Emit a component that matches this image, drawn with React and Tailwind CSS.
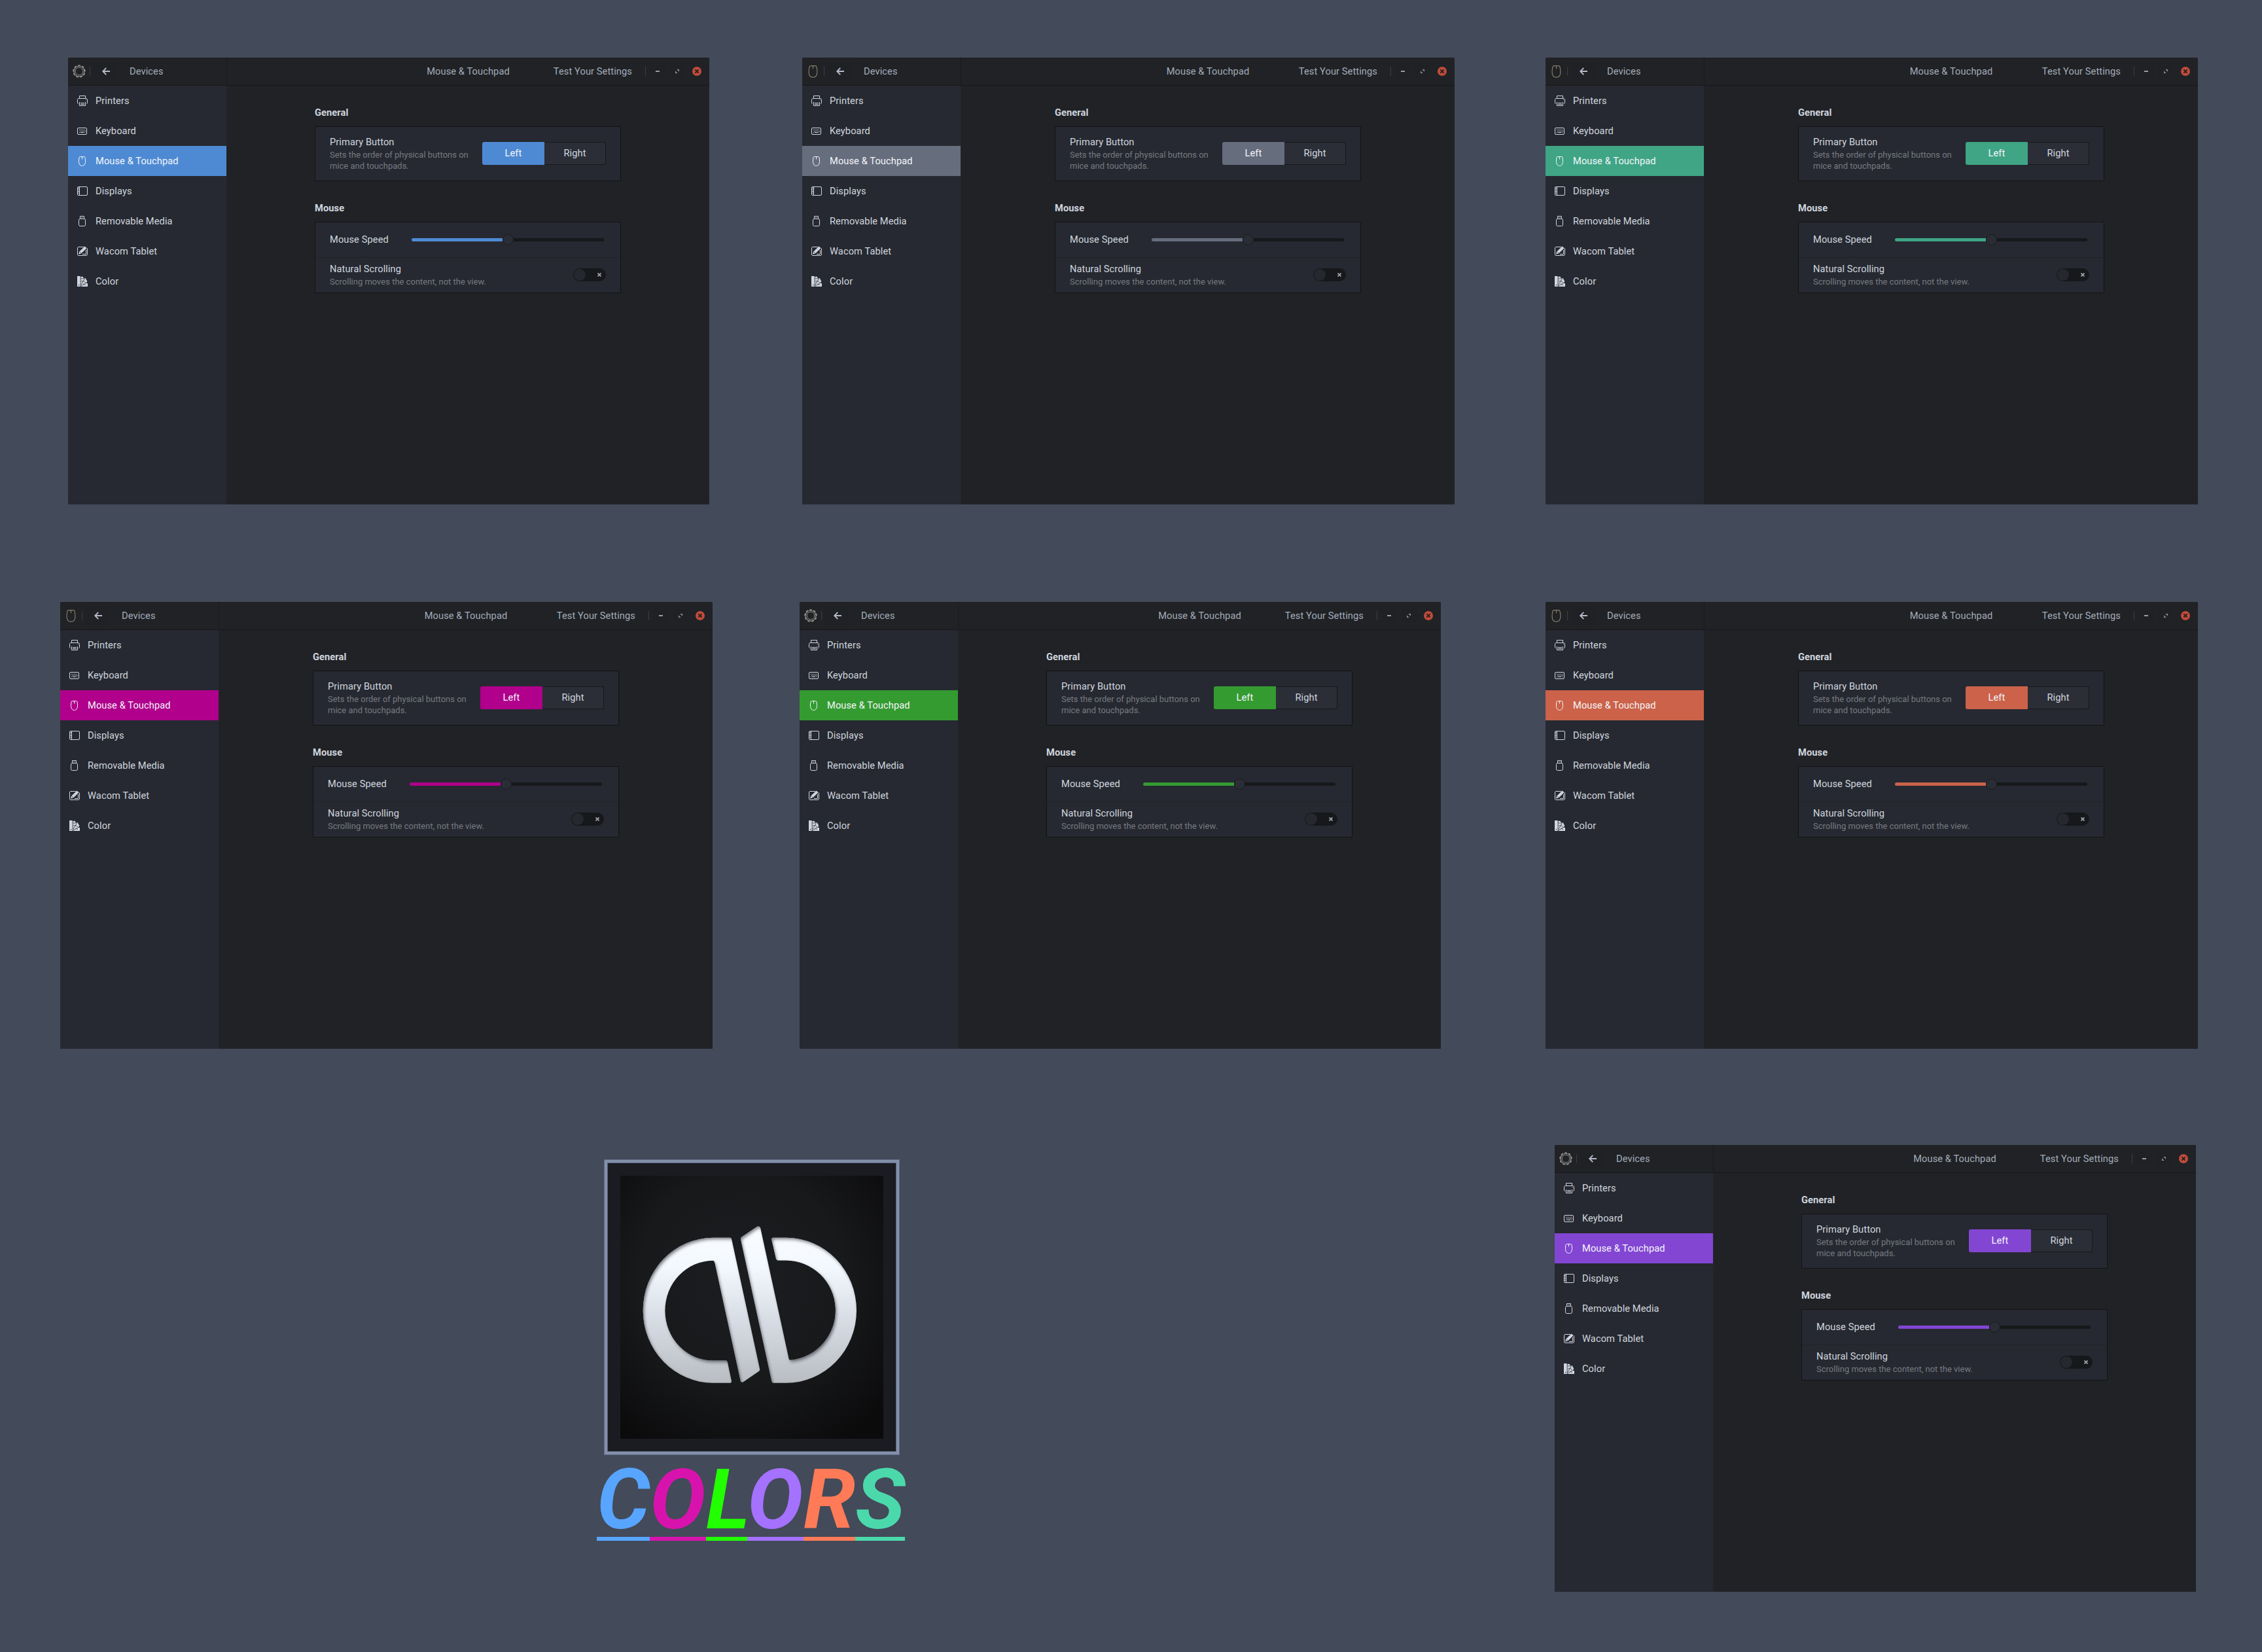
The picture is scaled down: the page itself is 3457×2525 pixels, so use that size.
import React from "react";

const WINDOWS = [
  { at: "left-[104px] top-[88px] w-[980px]", accent: "bg-[#4e8ad3]", app: "gear", inset: "pr-px" },
  { at: "left-[1226px] top-[88px] w-[997px]", accent: "bg-[#666d7d]", app: "mouse", inset: "pr-0" },
  { at: "left-[2362px] top-[88px] w-[997px]", accent: "bg-[#3fa585]", app: "mouse", inset: "pr-0" },
  { at: "left-[92px] top-[920px] w-[997px]", accent: "bg-[#b0008c]", app: "mouse", inset: "pr-0" },
  { at: "left-[1222px] top-[920px] w-[980px]", accent: "bg-[#349b31]", app: "gear", inset: "pr-px" },
  { at: "left-[2362px] top-[920px] w-[997px]", accent: "bg-[#cb6249]", app: "mouse", inset: "pr-0" },
  { at: "left-[2376px] top-[1750px] w-[980px]", accent: "bg-[#8346d3]", app: "gear", inset: "pr-px" },
];

function Glyph({ children }) {
  return (
    <svg width="16" height="16" viewBox="0 0 16 16" fill="none" stroke="currentColor" strokeWidth="1" className="shrink-0">
      {children}
    </svg>
  );
}

const PrinterIcon = () => (
  <Glyph>
    <path d="M3.5 4.5v-4h9v4" />
    <path d="M2 12.5C1 12.5.5 12 .5 11V6.5c0-1.3.7-2 2-2h11c1.3 0 2 .7 2 2V11c0 1-.5 1.5-1.5 1.5" />
    <path d="M3.5 10v5.5h9V10M5 11.5h6M5 13.5h6" />
    <path d="M13 6.5h1" />
  </Glyph>
);

const KeyboardIcon = () => (
  <Glyph>
    <rect x=".5" y="3.5" width="14" height="10" rx="1.5" />
    <path d="M3 6.5h10M4 8.5h9" strokeDasharray="1 1" />
    <path d="M3 10.5h1M5 10.5h5M11 10.5h1" />
  </Glyph>
);

const MouseIcon = () => (
  <Glyph>
    <path d="M4.5 1.5h6c1 0 1.3.5 1.5 1.5l.5 4c.4 5-1.5 8.5-5 8.5s-5.4-3.5-5-8.5L3 3c.2-1 .5-1.5 1.5-1.5ZM7.5 1.5v4" />
  </Glyph>
);

const DisplaysIcon = () => (
  <Glyph>
    <rect x=".5" y="1.5" width="15" height="13" rx="1.5" />
    <path d="M3.5 2v12" />
    <path d="M2 3v10" strokeWidth="2" strokeDasharray="1 1.5" />
  </Glyph>
);

const RemovableIcon = () => (
  <Glyph>
    <path d="M4.5 4V.5h6V4" />
    <path d="M6 2.5h1M8 2.5h1" />
    <rect x="2.5" y="4.5" width="10" height="11" rx="2" />
  </Glyph>
);

const WacomIcon = () => (
  <Glyph>
    <path d="M10 1.5H2C1 1.5.5 2 .5 3v10c0 1 .5 1.5 1.5 1.5h12c1 0 1.5-.5 1.5-1.5V3.5" />
    <path d="M13.5 6v6.5H8" />
    <path d="M11.6.4 14.6 3.3 6.3 11.2 2 12.8 3.3 8.4Z" fill="currentColor" stroke="none" />
    <path d="M3.6 8.6 6 11" stroke="#262931" strokeWidth=".7" />
  </Glyph>
);

const ColorIcon = () => (
  <Glyph>
    <g fill="currentColor" stroke="none">
      <path fillRule="evenodd" d="M0 0h4.7v16H0ZM2 13v1.2h1.2V13Z" />
      <path d="M5.5 1.2 8 .6 10.3 3.4 12.6 3 15.3 8 13.6 11H16v5H5.5Z" />
    </g>
    <path d="M5.5 4 12 3.8M5.5 14 11.3 4.5M5.5 15.5l8-5M6 8l4-.5 3.5 3M9 12l4 1.5" stroke="#262931" strokeWidth=".75" />
  </Glyph>
);

const ITEMS = [
  ["Printers", PrinterIcon],
  ["Keyboard", KeyboardIcon],
  ["Mouse & Touchpad", MouseIcon],
  ["Displays", DisplaysIcon],
  ["Removable Media", RemovableIcon],
  ["Wacom Tablet", WacomIcon],
  ["Color", ColorIcon],
];

const TEETH = [0, 40, 80, 120, 160, 200, 240, 280, 320];

function AppIcon({ kind }) {
  if (kind === "gear") {
    return (
      <svg width="20" height="20" viewBox="0 0 20 20" fill="none" stroke="#918f8b" className="shrink-0">
        <circle cx="10" cy="10" r="8" strokeWidth="1.2" />
        <circle cx="10" cy="10" r="5.9" strokeWidth="1" />
        {TEETH.map((a) => (
          <path key={a} d="M8.9 1.2h2.200" strokeWidth="1.8" strokeLinecap="round" transform={`rotate(${a} 10 10)`} />
        ))}
      </svg>
    );
  }
  return (
    <svg width="20" height="20" viewBox="0 0 20 20" fill="none" stroke="#857e6c" className="shrink-0">
      <path d="M6 1.6h7c1.2 0 1.7.5 2 1.8.6 2.5 1 5.2.9 8-.2 4.8-2.6 7.8-6.4 7.800s-6.200-3-6.400-7.800c-.1-2.800.3-5.500.9-8 .3-1.300.8-1.800 2-1.800ZM9.500 1.600v4.600" strokeWidth="1.200" />
    </svg>
  );
}

function TitleBar({ app }) {
  return (
    <div className="flex h-[43px] border-b border-[#17181a] bg-[#202225] text-[#a3acba]">
      <div className="flex w-[243px] items-center border-r border-[#191a1c] pl-[7px]">
        <AppIcon kind={app} />
        <div className="ml-[6px] h-[14px] w-px bg-[#3c3e42]" />
        <div className="ml-[5px] flex h-7 w-[37px] items-center justify-center rounded-sm bg-[#1f2124]">
          <svg width="12" height="12" viewBox="0 0 12 12" fill="none" stroke="#b4bac8" strokeWidth="1.9">
            <path d="M6.3.8 1.3 6l5 5.2M1.3 6H12" />
          </svg>
        </div>
        <span className="ml-[18px]">Devices</span>
      </div>
      <div className="grid flex-1 grid-cols-[1fr_auto_1fr] items-center">
        <span />
        <span>Mouse &amp; Touchpad</span>
        <div className="flex items-center justify-end pr-3">
          <span>Test Your Settings</span>
          <div className="ml-5 h-[14px] w-px bg-[#3c3e42]" />
          <div className="ml-[6px] flex h-5 w-[24px] items-center justify-center bg-[#1f2124]">
            <div className="h-[2px] w-[6px] bg-[#999da6]" />
          </div>
          <div className="ml-[6px] flex h-5 w-[24px] items-center justify-center bg-[#1f2124]">
            <svg width="6" height="6" viewBox="0 0 6 6" fill="#878b93">
              <path d="M2.3 0H6v3.7ZM0 2.3 3.7 6H0Z" />
            </svg>
          </div>
          <svg width="14" height="14" viewBox="0 0 14 14" className="ml-[11px]">
            <circle cx="7" cy="7" r="7" fill="#c14b3b" />
            <path d="m4.4 4.4 5.2 5.2M9.6 4.4 4.4 9.6" stroke="#25211f" strokeWidth="2" />
          </svg>
        </div>
      </div>
    </div>
  );
}

function Sidebar({ accent }) {
  return (
    <div className="w-[243px] border-r border-[#222428] bg-[#262931]">
      {ITEMS.map(([label, Icon], i) => (
        <div
          key={label}
          className={`flex h-[46px] items-center gap-3 pl-[14px] ${i === 2 ? `${accent} text-[#f4f6fa]` : "text-[#d0d5df]"}`}
        >
          <Icon />
          <span>{label}</span>
        </div>
      ))}
    </div>
  );
}

function Settings({ accent, inset }) {
  return (
    <div className={`flex flex-1 flex-col items-center text-[#d0d5df] ${inset}`}>
      <div className="w-[468px] pt-[32px]">
        <div className="h-[18px] leading-[18px] font-bold">General</div>
        <div className="mt-3 flex h-[84px] justify-between border border-[#121315] bg-[#262931] pr-[22px] pl-[22px]">
          <div className="pt-[14px]">
            <div className="h-[20px] leading-[18px]">Primary Button</div>
            <div className="w-[220px] text-[13px] leading-[17px] tracking-normal whitespace-nowrap text-[#777a81]">
              Sets the order of physical buttons on
              <br />
              mice and touchpads.
            </div>
          </div>
          <div className="mt-[23px] flex h-[35px] text-center leading-[32px]">
            <div className={`w-[95px] rounded-l-[3px] pt-px text-[#f4f6fa] ${accent}`}>Left</div>
            <div className="w-[94px] rounded-r-[3px] border border-l-0 border-[#17181b] bg-[#2b2e37]">Right</div>
          </div>
        </div>
        <div className="mt-[32px] h-[18px] leading-[18px] font-bold">Mouse</div>
        <div className="mt-3 flex h-[109px] flex-col border border-[#121315] bg-[#262931]">
          <div className="flex h-[54px] items-center justify-between border-b border-[#212327] pr-[25px] pl-[22px]">
            <span className="leading-[21px]">Mouse Speed</span>
            <div className="flex w-[294px] items-center">
              <div className={`h-[5px] w-[139px] rounded-l-full ${accent}`} />
              <div className="size-[17px] rounded-full border border-[#1a1c1f] bg-[#2a2d36]" />
              <div className="h-[5px] flex-1 rounded-r-full bg-[#17181b]" />
            </div>
          </div>
          <div className="flex flex-1 items-center justify-between pr-[22px] pb-px pl-[22px]">
            <div className="pt-[2px]">
              <div className="h-[20px] leading-[20px]">Natural Scrolling</div>
              <div className="h-[20px] text-[13px] leading-[20px] tracking-normal text-[#777a81]">
                Scrolling moves the content, not the view.
              </div>
            </div>
            <div className="flex h-5 w-[50px] items-center justify-between rounded-full bg-[#17181b] pr-[7px] pl-px">
              <div className="size-[18px] rounded-full bg-[#25282f]" />
              <svg width="6" height="6" viewBox="0 0 6 6" stroke="#a2a5ab" strokeWidth="1.7">
                <path d="m.5.5 5 5M5.5.5l-5 5" />
              </svg>
            </div>
          </div>
        </div>
      </div>
    </div>
  );
}

function DevicesWindow({ at, accent, app, inset }) {
  return (
    <div
      className={`absolute flex h-[683px] flex-col overflow-hidden rounded-t-[2px] bg-[#202226] text-[14.667px] tracking-[0.08px] ${at}`}
    >
      <TitleBar app={app} />
      <div className="flex flex-1">
        <Sidebar accent={accent} />
        <Settings accent={accent} inset={inset} />
      </div>
    </div>
  );
}

const LETTERS = [
  ["C", "w-[81px] text-[#57a5ff] border-[#57a5ff]"],
  ["O", "w-[86px] text-[#d813ad] border-[#d813ad]"],
  ["L", "w-[63px] text-[#22ff00] border-[#22ff00]"],
  ["O", "w-[86px] text-[#a571ff] border-[#a571ff]"],
  ["R", "w-[79px] text-[#ff7b57] border-[#ff7b57]"],
  ["S", "w-[76px] text-[#4bd9ac] border-[#4bd9ac]"],
];

function Brand() {
  return (
    <div className="absolute top-[1772px] left-[912px] w-[471px]">
      <div className="ml-[11px] flex size-[452px] items-center justify-center border border-[#5f6a83] bg-[#8490aa] p-1">
        <div className="flex size-full items-center justify-center border border-[#55617b] bg-[#1a1c21]">
          <svg width="402" height="402" viewBox="144 117 1206 1000" preserveAspectRatio="none">
            <defs>
              <radialGradient id="plate" cx=".46" cy=".4" r=".72">
                <stop offset="0" stopColor="#1c1d20" />
                <stop offset=".55" stopColor="#18191b" />
                <stop offset="1" stopColor="#0b0b0c" />
              </radialGradient>
              <linearGradient id="metal" gradientUnits="userSpaceOnUse" x1="0" y1="320" x2="0" y2="905">
                <stop offset="0" stopColor="#fafdff" />
                <stop offset=".25" stopColor="#f3f8fe" />
                <stop offset=".65" stopColor="#d3d8e0" />
                <stop offset="1" stopColor="#b9bdc2" />
              </linearGradient>
              <filter id="bevel" x="-5%" y="-5%" width="110%" height="110%">
                <feOffset in="SourceAlpha" dx="5" dy="7" result="shifted" />
                <feGaussianBlur in="shifted" stdDeviation="6" result="soft" />
                <feComposite in="SourceAlpha" in2="soft" operator="out" result="edge" />
                <feFlood floodColor="#33374a" floodOpacity=".85" />
                <feComposite in2="edge" operator="in" result="shade" />
                <feMerge>
                  <feMergeNode in="SourceGraphic" />
                  <feMergeNode in="shade" />
                </feMerge>
              </filter>
            </defs>
            <rect x="144" y="117" width="1206" height="1000" fill="url(#plate)" />
            <g fill="url(#metal)" filter="url(#bevel)">
              <path d="M570 353H648Q653 353 655 361L784 854Q784 858 779 861L710 900Q698 906 695 896L577 447Q575 440 568 440A220 190 0 0 0 570 820H629Q634 820 636 827L654 898Q655 905 648 905H570A322 276 0 0 1 570 353Z" />
              <path d="M700 350 768 312Q783 305 787 318L917 814Q918 818 926 818A228 190 0 0 0 905 439H866Q860 438 858 433L838 361Q837 353 844 353H905A322 276 0 0 1 905 905H848Q840 905 838 898L696 358Q695 353 700 350Z" />
            </g>
          </svg>
        </div>
      </div>
      <div className="mt-1 flex text-[128px] leading-none font-bold italic">
        {LETTERS.map(([ch, look], i) => (
          <span key={i} className={`box-content h-[121px] border-b-[6px] ${look}`}>
            {ch}
          </span>
        ))}
      </div>
    </div>
  );
}

export default function App() {
  return (
    <div className="relative h-[2525px] w-[3457px] overflow-hidden bg-[#434a59] font-['Roboto',sans-serif]">
      {WINDOWS.map((w) => (
        <DevicesWindow key={w.at} {...w} />
      ))}
      <Brand />
    </div>
  );
}
